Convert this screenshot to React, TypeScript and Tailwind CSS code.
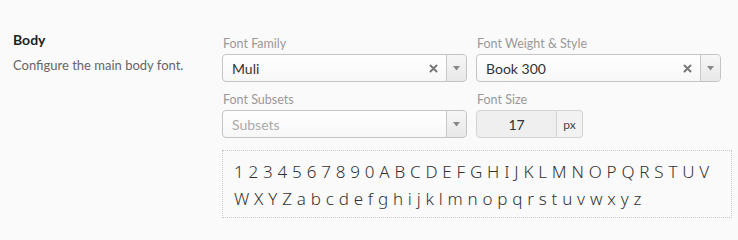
import React from "react";

const font = { fontFamily: "Lato, 'Open Sans', sans-serif" };

function Clear() {
  return (
    <svg width="9" height="9" viewBox="0 0 9 9" className="mr-[8px]">
      <path d="M1.5 1.5 L7.5 7.5 M7.5 1.5 L1.5 7.5" stroke="#777" strokeWidth="2" strokeLinecap="round" />
    </svg>
  );
}

function Arrow() {
  return (
    <div className="w-[20px] h-full flex items-center justify-center border-l border-[#c8c8c8] bg-gradient-to-b from-[#f6f6f6] to-[#e8e8e8] rounded-r-[4px]">
      <svg width="7" height="5" viewBox="0 0 7 5">
        <path d="M0 0 L7 0 L3.5 4.5 Z" fill="#888" />
      </svg>
    </div>
  );
}

function Select({ value, placeholder, clear }: { value?: string; placeholder?: string; clear?: boolean }) {
  return (
    <div className="h-[28px] w-[245px] flex items-center border border-[#c4c4c4] rounded-[4px] bg-gradient-to-b from-white to-[#f7f7f7]">
      <div className={`flex-1 pl-[9px] text-[14px] ${value ? "text-[#333]" : "text-[#aaa]"}`}>{value ?? placeholder}</div>
      {clear && <Clear />}
      <Arrow />
    </div>
  );
}

function Label({ children }: { children: React.ReactNode }) {
  return <div className="text-[12.5px] text-[#999] leading-[16px] mb-[2px] pl-[1px]">{children}</div>;
}

export default function App() {
  return (
    <div className="w-[738px] h-[240px] bg-[#fafafa] flex" style={font}>
      <div className="w-[222px] pl-[13px] pt-[30px]">
        <div className="text-[14px] font-bold text-[#222] leading-[20px]">Body</div>
        <div className="text-[13px] text-[#666] leading-[18px] mt-[6px]">Configure the main body font.</div>
      </div>
      <div className="pt-[36px]">
        <div className="grid grid-cols-[245px_245px] gap-x-[9px] gap-y-[10px]">
          <div>
            <Label>Font Family</Label>
            <Select value="Muli" clear />
          </div>
          <div>
            <Label>Font Weight &amp; Style</Label>
            <Select value="Book 300" clear />
          </div>
          <div>
            <Label>Font Subsets</Label>
            <Select placeholder="Subsets" />
          </div>
          <div>
            <Label>Font Size</Label>
            <div className="flex h-[28px] w-[107px]">
              <div className="w-[81px] flex items-center justify-center text-[14px] text-[#333] bg-[#efefef] border border-[#d4d4d4] rounded-l-[4px]">17</div>
              <div className="w-[26px] flex items-end justify-center pb-[3px] text-[12px] text-[#444] bg-[#f2f2f2] border border-l-0 border-[#d4d4d4] rounded-r-[4px]">px</div>
            </div>
          </div>
        </div>
        <div
          className="mt-[12px] w-[510px] h-[68px] border border-dotted border-[#c8c8c8] pl-[11px] pr-[8px] pt-[7px] text-[17px] leading-[27px] text-[#333] tracking-[0.2px]"
          style={{ fontFamily: "'Noto Sans', sans-serif", fontWeight: 300 }}
        >
          1 2 3 4 5 6 7 8 9 0 A B C D E F G H I J K L M N O P Q R S T U V W X Y Z a b c d e f g h i j k l m n o p q r s t u v w x y z
        </div>
      </div>
    </div>
  );
}
